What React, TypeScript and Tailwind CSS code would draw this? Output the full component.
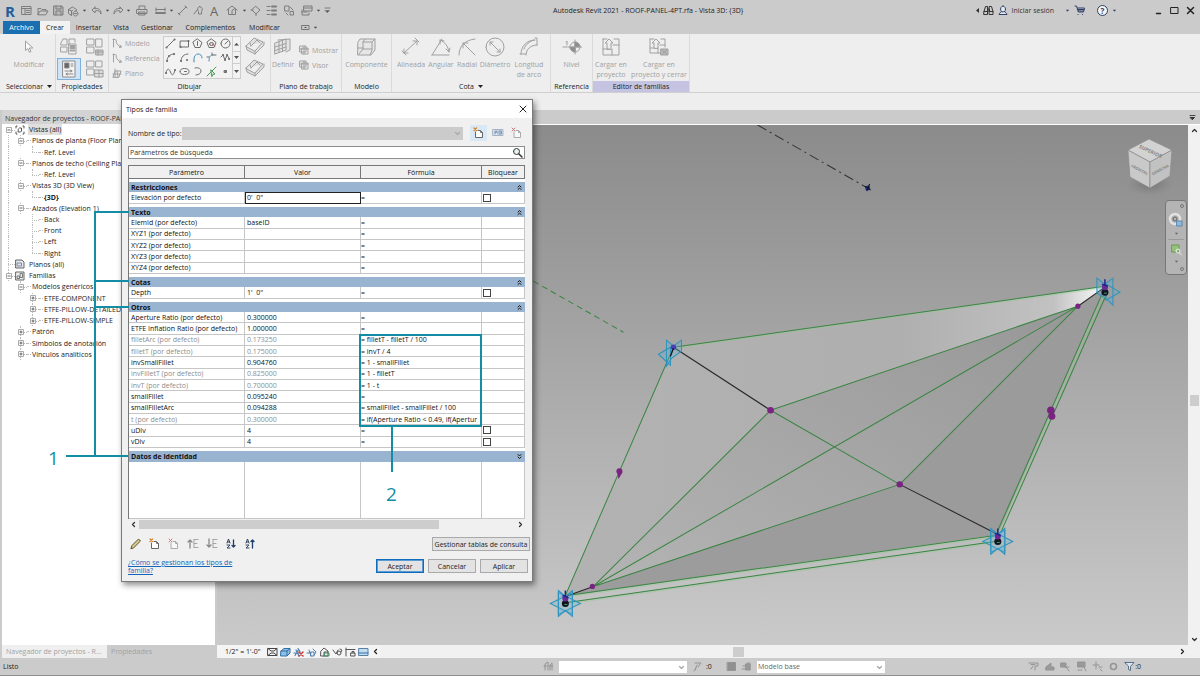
import React from "react";
import type { ReactNode } from "react";

type Stroke = { d: string; c?: string; f?: string; w?: number };

function Icon({ w, h, parts, className = "" }: { w: number; h: number; parts: Stroke[]; className?: string }) {
  return (
    <svg width={w} height={h} viewBox={`0 0 ${w} ${h}`} className={`shrink-0 ${className}`} aria-hidden="true">
      {parts.map((p, i) => (
        <path key={i} d={p.d} fill={p.f ?? "none"} stroke={p.c ?? "currentColor"} strokeWidth={p.w ?? 1} strokeLinecap="round" strokeLinejoin="round" />
      ))}
    </svg>
  );
}

const caret = (
  <svg width="5" height="3" viewBox="0 0 5 3" className="shrink-0" aria-hidden="true">
    <path d="M0 0h5L2.500 3z" fill="currentColor" />
  </svg>
);

const quickTools: { slot: string; label: string; w?: number; h?: number; parts?: Stroke[]; text?: string; caret?: boolean }[] = [
  { slot: "w-4", label: "Inicio", w: 11, h: 11, parts: [{ d: "M1 1.500h9v8h-9zM1 3.500h9M4 3.500v6M5.500 5.500h3M5.500 7.500h3" }] },
  { slot: "w-[18px]", label: "Abrir", w: 12, h: 10, parts: [{ d: "M1 8.500v-6h3l1 1h4v1.500M1 8.500l2-3.500h8l-2 3.500z" }] },
  { slot: "w-[13px]", label: "Guardar", w: 11, h: 11, parts: [{ d: "M1 1h8l1 1v8h-9z", f: "#b9b9b9" }, { d: "M3 1v3h5v-3M3 10v-4h5v4" }] },
  { slot: "w-[15px]", label: "Sincronizar", w: 12, h: 12, parts: [{ d: "M1.500 4.500l4-2.500 4 2.500v1M1.500 4.500v4l3 2M1.500 4.500l3 1.500v4M4.500 6l1-.5" }, { d: "M8.500 6a2.500 2.500 0 1 0 .1 0M7 8.500h3" }] },
  { slot: "w-2", label: "Opciones de sincronizar", caret: true },
  { slot: "w-4", label: "Deshacer", w: 11, h: 9, parts: [{ d: "M4 1L1 4l3 3v-2c3-1 5 0 6 3 0-4-2-6-6-5.500z" }] },
  { slot: "w-[7px]", label: "Lista deshacer", caret: true },
  { slot: "w-[14px]", label: "Rehacer", w: 11, h: 9, parts: [{ d: "M7 1l3 3-3 3v-2c-3-1-5 0-6 3 0-4 2-6 6-5.500z" }] },
  { slot: "w-[7px]", label: "Lista rehacer", caret: true },
  { slot: "w-5", label: "Imprimir", w: 12, h: 11, parts: [{ d: "M3 4v-3h6v3M1 4.500h10v4h-10zM3 7h6v3h-6z" }] },
  { slot: "w-4", label: "Medir", w: 11, h: 8, parts: [{ d: "M1 1v3M10 1v3M1 2.500h9" }, { d: "M1 6h9", w: 2 }] },
  { slot: "w-[6px]", label: "Opciones de medir", caret: true },
  { slot: "w-4", label: "Cota alineada", w: 11, h: 11, parts: [{ d: "M2 9l7-7M1 8l2 2M8 1l2 2", w: 1 }] },
  { slot: "w-4", label: "Etiqueta", w: 11, h: 11, parts: [{ d: "M1 9l3-4M6.500 1.500a3 3 0 0 1 2 5v2.500h-3v-2.500a3 3 0 0 1 1-5z" }] },
  { slot: "w-4", label: "Texto", text: "A" },
  { slot: "w-[19px]", label: "Vista 3D", w: 12, h: 11, parts: [{ d: "M1 5l5-4 5 4M2.500 4.500v5h7v-5M6 9.500v-4l3-2" }] },
  { slot: "w-[6px]", label: "Opciones 3D", caret: true },
  { slot: "w-4", label: "Sección", w: 11, h: 11, parts: [{ d: "M6 1.500l4 3.500-4 4-4-4zM1 5h2M6 9v1.500" }] },
  { slot: "w-4", label: "Líneas finas", w: 11, h: 11, parts: [{ d: "M1 1.500h3M1 5.500h3M1 9.500h3" }, { d: "M6 1.500h4M6 5.500h4M6 9.500h4", w: 2 }] },
  { slot: "w-5", label: "Cerrar ocultas", w: 11, h: 11, parts: [{ d: "M1 1h4v5h-4zM6.500 6.500h3v3.500h-3zM6 2l3 3M2 8l2 2" }] },
  { slot: "w-[16px]", label: "Cambiar ventana", w: 12, h: 11, parts: [{ d: "M3 1h8v5h-8zM3 3h8M1 5v5h7v-2M1 7h5" }] },
  { slot: "w-[6px]", label: "Lista de ventanas", caret: true },
  { slot: "w-3", label: "Personalizar", w: 7, h: 7, parts: [{ d: "M1 1h5" }, { d: "M1.500 3.500h4l-2 2z", f: "#4a4a4a" }] },
];

const ribbonTabs = [
  { name: "Archivo", cls: "w-[37px] bg-[#1b6fb0] text-white" },
  { name: "Crear", cls: "w-[30px] bg-[#f2f2f2] text-[#222]" },
  { name: "Insertar", cls: "w-[37px] text-[#222]" },
  { name: "Vista", cls: "w-[28px] text-[#222]" },
  { name: "Gestionar", cls: "w-[44px] text-[#222]" },
  { name: "Complementos", cls: "w-[63px] text-[#222]" },
  { name: "Modificar", cls: "w-[45px] text-[#222]" },
];

function Panel({ title, width, children, caretAfter = false, active = false }: { title: string; width: string; children: ReactNode; caretAfter?: boolean; active?: boolean }) {
  return (
    <section className={`flex shrink-0 flex-col border-r border-[#dadada] ${width}`}>
      <div className="flex h-[47px] items-start justify-center pt-0.5 text-[#a0a0a0]">{children}</div>
      <h2 className={`flex h-[11px] items-center justify-center gap-1 text-[#222] ${active ? "bg-[#c4c4e2]" : ""}`}>
        {title}
        {caretAfter && caret}
      </h2>
    </section>
  );
}

function BigTool({ label, width, icon }: { label: string; width: string; icon: ReactNode }) {
  return (
    <button type="button" className={`flex shrink-0 flex-col items-center ${width}`}>
      <span className="flex h-[22px] items-center">{icon}</span>
      <span className="pt-0.5 text-center leading-[10px] whitespace-pre-line">{label}</span>
    </button>
  );
}

const g = "#8b8b8b";
const drawTools: { label: string; parts: Stroke[] }[] = [
  { label: "Línea", parts: [{ d: "M2 9l7-7" }, { d: "M1.500 9.500h.1M9.500 1.500h.1", w: 2 }] },
  { label: "Rectángulo", parts: [{ d: "M1.500 3h8v6h-8z" }, { d: "M1.500 9h.1M9.500 3h.1", w: 2 }] },
  { label: "Polígono inscrito", parts: [{ d: "M5.500 1l4.500 3.500-2 5h-5l-2-5zM5.500 3.500v4" }] },
  { label: "Polígono circunscrito", parts: [{ d: "M5.500 1l4.500 3.500-2 5h-5l-2-5zM3.500 6a2 1.500 0 1 0 4 0 2 1.500 0 1 0-4 0" }, { d: "M6 6l3 2", c: "#c66" }] },
  { label: "Círculo", parts: [{ d: "M1 5.500a4.500 4.500 0 1 0 9 0 4.500 4.500 0 1 0-9 0M5 6l3-3" }] },
  { label: "Arco inicio-fin", parts: [{ d: "M2 9c0-4 3-7 7-7" }, { d: "M2 9h.1M9 2h.1M4 4h.1", w: 2 }] },
  { label: "Arco centro", parts: [{ d: "M2 9c0-4 3-7 7-7" }, { d: "M2 9h.1M8 8h.1", w: 2 }] },
  { label: "Arco tangente", parts: [{ d: "M2 9v-2c0-3 2-5 4-5s4 1 4 4", c: "#4b8fbe" }, { d: "M2 9v1", c: g }] },
  { label: "Arco de empalme", parts: [{ d: "M3 9c0-4 1-6 4-6", c: "#4b8fbe" }, { d: "M1 5h2M7 3h3M6 1v2" }] },
  { label: "Spline", parts: [{ d: "M1 5l2-2 2 5 2-5 2 3" }, { d: "M3 3h.1M5 8h.1M7 3h.1M9 7h.1", w: 2 }] },
  { label: "Spline por puntos", parts: [{ d: "M1 7c1-5 3-5 4.500-1s3 4 4.500-2" }, { d: "M1 7h.1M10 4h.1", w: 2 }] },
  { label: "Elipse", parts: [{ d: "M1 5.500a4.500 3 0 1 0 9 0 4.500 3 0 1 0-9 0M5.500 5.500h2" }] },
  { label: "Elipse parcial", parts: [{ d: "M3 2c4-1 6 1 6 3s-2 4-5 4" }] },
  { label: "Seleccionar líneas", parts: [{ d: "M1 10l9-9", c: "#4a9a55" }, { d: "M5 4l4 4-2 .3-1 2z", c: "#4a9a55", f: "#d9ecd9" }] },
  { label: "Punto", parts: [{ d: "M4.500 4.500h2v2h-2z", f: "#777" }] },
];

function RibbonPanels() {
  const cell = "flex items-center justify-center";
  return (
    <div className="flex h-[59px] overflow-hidden border-b border-[#cfcfcf] bg-[#eeeeee] pl-[3px]">
      <Panel title="Seleccionar" width="w-[53px]" caretAfter>
        <BigTool label="Modificar" width="w-12" icon={<Icon w={10} h={14} parts={[{ d: "M1.500 1.500v9l2.300-2 1.700 3.800 1.500-.8-1.700-3.500h3.200z", f: "#fafafa" }]} />} />
      </Panel>
      <Panel title="Propiedades" width="w-[53px]">
        <div className="grid grid-cols-2 gap-x-0.5">
          <button type="button" aria-label="Categoría y parámetros" className={`${cell} h-[22px] w-6`}>
            <Icon w={20} h={20} parts={[{ d: "M2 6l2-4h4v6h-6zM10 8v-6h6v3M2 10h6v5h-6zM10 7h7v10h-7z" }, { d: "M11.500 9h4M11.500 11h4M11.500 13.500h4", w: 2 }]} />
          </button>
          <button type="button" aria-label="Tipos de familia" className={`${cell} h-[22px] w-6`}>
            <Icon w={20} h={20} parts={[{ d: "M2 2h7v6h-7zM11 2h6v8h-6zM2 10h7v6h-7z" }, { d: "M11 13h7v5h-7zM11 15h7M13 13v5", f: "#c8c8c8" }]} />
          </button>
          <button type="button" aria-label="Propiedades" className={`${cell} h-[22px] w-6 border border-[#7eb0da] bg-[#cfe4f6] text-[#8a8a8a]`}>
            <Icon w={14} h={18} parts={[{ d: "M1 1h12v16h-12z", f: "#f4f4f4" }, { d: "M3 3h4v5h-4z", f: "#666" }, { d: "M9 4h2M9 6h2M3 11h7M4 14h7M8.500 10l1.500 1-1.500 1M5.500 13l-1.500 1 1.500 1" }]} />
          </button>
          <button type="button" aria-label="Propiedades de tipo" className={`${cell} h-[22px] w-6`}>
            <Icon w={20} h={20} parts={[{ d: "M2 2h7v6h-7zM11 2h6v6h-6zM2 10h7v6h-7z" }, { d: "M10 11h8v7h-8zM10 14.500h8M14 11v7", f: "#dedede" }]} />
          </button>
        </div>
      </Panel>
      <Panel title="Dibujar" width="w-[162px]">
        <div className="flex w-full pl-[3px]">
          <div className="flex w-[51px] flex-col gap-[5px] pt-0.5">
            {["Modelo", "Referencia", "Plano"].map((n) => (
              <button type="button" key={n} className="flex h-[10px] items-center gap-[3px]">
                <Icon w={10} h={10} parts={n === "Plano" ? [{ d: "M1 9l2-6h6l-2 6zM3 1v8M5 3l1 6M1 6h8" }] : [{ d: "M1.500 1v8M1 1.500h2M4 2c0 4 2 6 5 7M8 7l1.500 2-2 .5" }]} />
                {n}
              </button>
            ))}
          </div>
          <div className="flex h-[43px] w-[78px] border border-[#cdcdcd] bg-[#f2f2f2]">
            <div className="grid flex-1 grid-cols-5 grid-rows-3 text-[#6c6c6c]">
              {drawTools.map((t) => (
                <button type="button" key={t.label} aria-label={t.label} className={cell}>
                  <Icon w={11} h={11} parts={t.parts} />
                </button>
              ))}
            </div>
            <div className="grid w-2 grid-rows-3 border-l border-[#cdcdcd] text-[#555]">
              <button type="button" aria-label="Subir" className="flex rotate-180 items-center justify-center">{caret}</button>
              <button type="button" aria-label="Bajar" className={`${cell} border-y border-[#cdcdcd]`}>{caret}</button>
              <button type="button" aria-label="Más" className={cell}>{caret}</button>
            </div>
          </div>
          <div className="flex w-[25px] flex-col items-center gap-0.5 pl-0.5">
            {["Definir en cara", "Definir en plano"].map((n) => (
              <button type="button" key={n} aria-label={n}>
                <Icon w={20} h={20} parts={[{ d: "M1 10l8-8 9 4-8 9zM1 10l1 4 8 4 9-9v-3M10 15v3", f: "#e0e0e0" }, { d: "M6 10l6-6 3 3M6 10l-1-3" }]} />
              </button>
            ))}
          </div>
        </div>
      </Panel>
      <Panel title="Plano de trabajo" width="w-[71px]">
        <div className="flex w-full justify-between pr-[3px]">
          <BigTool label="Definir" width="w-6" icon={<Icon w={20} h={20} parts={[{ d: "M2 6l11-4v11l-11 4zM5 3l12-1v11l-4 2M2 10l11-3.500M2 13.500l11-3.500M6 4.500v11M9.500 3.500v11", f: "#e4e4e4" }]} />} />
          <div className="flex flex-col gap-[5px] pt-[9px]">
            {["Mostrar", "Visor"].map((n) => (
              <button type="button" key={n} className="flex h-[10px] items-center gap-[3px]">
                <Icon w={10} h={10} parts={[{ d: "M1 1h6v6h-6zM3 3h6v6h-6zM1 4h8M5 1v8" }]} />
                {n}
              </button>
            ))}
          </div>
        </div>
      </Panel>
      <Panel title="Modelo" width="w-[50px]">
        <BigTool label="Componente" width="w-12" icon={<Icon w={20} h={20} parts={[{ d: "M1 5l2-3h15v11l-4 5h-13z", f: "#e6e6e6" }, { d: "M1 11h5v-6l2-3M6 5h9l3-3M15 5v8l-2 5M6 11v1l-4 5M6 12h9" }]} />} />
      </Panel>
      <Panel title="Cota" width="w-[159px]" caretAfter>
        <BigTool label="Alineada" width="w-8" icon={<Icon w={20} h={20} parts={[{ d: "M3 16l13-12M1 14l4 4M14 1l4 4M3 12v4h4M12 4h4v4" }]} />} />
        <BigTool label="Angular" width="w-7" icon={<Icon w={20} h={20} parts={[{ d: "M1 18h17M1 18l10-16M9 3c5 2 8 6 9 12M9 7v-4l4 1M15 12l3 3 1-4" }]} />} />
        <BigTool label="Radial" width="w-6" icon={<Icon w={20} h={20} parts={[{ d: "M2 18c0-9 6-15 16-16M6 6l12 12M6 11v-5h5" }]} />} />
        <BigTool label="Diámetro" width="w-8" icon={<Icon w={20} h={20} parts={[{ d: "M1 10a9 9 0 1 0 18 0a9 9 0 1 0-18 0M5 5l10 10M5 8v-3h3M12 15h3v-3" }]} />} />
        <BigTool label={"Longitud\nde arco"} width="w-9" icon={<Icon w={20} h={20} parts={[{ d: "M2 17c0-8 6-14 14-14M7 18c0-6 5-10 11-10M5 12c1-4 6-8 10-9M1 17h6M16 1h2v7" }]} />} />
      </Panel>
      <Panel title="Referencia" width="w-[42px]">
        <BigTool label="Nivel" width="w-9" icon={<Icon w={20} h={16} parts={[{ d: "M1 8h4M4 3l1-1v4" }, { d: "M8 8a5 5 0 1 0 10 0a5 5 0 1 0-10 0M6 8h14M13 1v14" }, { d: "M13 3a5 5 0 0 1 5 5h-5zM13 13a5 5 0 0 1-5-5h5z", f: "#8d8d8d" }]} />} />
      </Panel>
      <Panel title="Editor de familias" width="w-[97px]" active>
        <BigTool label={"Cargar en\nproyecto"} width="w-9" icon={<Icon w={18} h={20} parts={[{ d: "M1 2h4M12 2h5v16h-16v-16M1 12h6M11 8h6M10 12v6M5 12v-6h-2l4-4 4 4h-2v6z" }]} />} />
        <BigTool label={"Cargar en\nproyecto y cerrar"} width="w-[60px]" icon={<Icon w={20} h={20} parts={[{ d: "M1 2h4M12 2h4v8M1 2v14h10M11 8h5M5 11v-5h-2l4-4 4 4h-2v5zM1 11h4M9 11v5" }, { d: "M12 12h7v6h-7z", f: "#bbb" }, { d: "M13.500 13.500l4 3M17.500 13.500l-4 3" }]} />} />
      </Panel>
    </div>
  );
}

function TopBar() {
  return (
    <header className="bg-[#cbcbcb]">
      <div className="flex h-[21px] items-center text-[#7c7c7c]">
        <div className="flex w-[553px] shrink-0 items-center pl-0.5">
          <span className="w-4 text-center font-bold text-[15px] leading-[18px] text-[#1f5f9c]">R</span>
          {quickTools.map((t) => (
            <button type="button" key={t.label} aria-label={t.label} className={`flex shrink-0 items-center justify-center ${t.slot}`}>
              {t.caret ? <span className="scale-75 text-[#444]">{caret}</span> : t.text ? <span className="text-[13px] leading-[14px] text-[#666]">{t.text}</span> : <Icon w={t.w!} h={t.h!} parts={t.parts!} />}
            </button>
          ))}
        </div>
        <h1 className="whitespace-nowrap text-[#222]">Autodesk Revit 2021 - ROOF-PANEL-4PT.rfa - Vista 3D: {"{3D}"}</h1>
        <div className="flex flex-1 items-center justify-end gap-1 pr-[5px] text-[#2d3f66]">
          <svg width="3" height="5" viewBox="0 0 3 5" aria-hidden="true"><path d="M3 0v5L0 2.500z" fill="#333" /></svg>
          <button type="button" aria-label="Buscar"><Icon w={11} h={11} parts={[{ d: "M1 6.500l1.500-5h2v8h-3.500zM6.500 1.500h2l1.500 5v3h-3.500zM4.500 4h2v2h-2M1 6.500h3.500M6.500 6.500h3.500", c: "#333" }]} /></button>
          <button type="button" className="mr-[7px] flex items-center gap-[3px]">
            <Icon w={10} h={11} parts={[{ d: "M5 1a2.500 3 0 1 0 .1 0M3.500 6.500c0 1.500-2.500 1-2.500 3h8c0-2-2.500-1.500-2.500-3", f: "#e6ebf3" }]} />
            <span className="text-[#333]">Iniciar sesión</span>
          </button>
          <span className="scale-75">{caret}</span>
          <button type="button" aria-label="Tienda" className="mr-1"><Icon w={11} h={11} parts={[{ d: "M1 1h1.500l2 6h5l1-4h-7M4 9.500h.1M8.500 9.500h.1", w: 1 }, { d: "M3.500 4.500h6.500M4 6h5" }]} /></button>
          <button type="button" aria-label="Ayuda" className="ml-1 flex h-[11px] w-[11px] items-center justify-center rounded-full border border-[#2d3f66] bg-[#f5f5f5] text-[8px] font-bold leading-[8px]">?</button>
          <span className="mr-[34px] scale-75">{caret}</span>
          <button type="button" aria-label="Minimizar" className="w-[11px]"><Icon w={8} h={9} parts={[{ d: "M1.500 7.500h4", c: "#222", w: 1.5 }]} /></button>
          <button type="button" aria-label="Maximizar" className="w-3"><Icon w={9} h={9} parts={[{ d: "M1 1.500h7v6h-7z", c: "#222" }]} /></button>
          <button type="button" aria-label="Cerrar"><Icon w={9} h={9} parts={[{ d: "M1.500 1.500l6 6M7.500 1.500l-6 6", c: "#222", w: 1.5 }]} /></button>
        </div>
      </div>
      <nav className="flex h-[13px] items-stretch pl-[3px]">
        {ribbonTabs.map((t) => (
          <a key={t.name} href="#" className={`flex items-center justify-center ${t.cls}`}>{t.name}</a>
        ))}
        <button type="button" aria-label="Contraer cinta" className="flex items-center gap-[3px] pl-[14px] text-[#444]">
          <Icon w={9} h={7} parts={[{ d: "M1 1.500h7v4h-7z", c: "#777" }, { d: "M4 3.500h1" }]} />
          <span className="scale-75">{caret}</span>
        </button>
      </nav>
      <RibbonPanels />
      <div className="h-[17px] bg-[#eeeeee]" />
    </header>
  );
}

type Node = { t: string; box?: "-" | "+"; icon?: "v" | "p" | "f"; guides?: boolean[]; last?: boolean; bold?: boolean; sel?: boolean };
const tree: Node[] = [
  { t: "Vistas (all)", box: "-", icon: "v", sel: true },
  { t: "Planos de planta (Floor Plan)", box: "-", guides: [true] },
  { t: "Ref. Level", guides: [true, true], last: true },
  { t: "Planos de techo (Ceiling Plan)", box: "-", guides: [true] },
  { t: "Ref. Level", guides: [true, true], last: true },
  { t: "Vistas 3D (3D View)", box: "-", guides: [true] },
  { t: "{3D}", guides: [true, true], last: true, bold: true },
  { t: "Alzados (Elevation 1)", box: "-", guides: [true] },
  { t: "Back", guides: [true, false] },
  { t: "Front", guides: [true, false] },
  { t: "Left", guides: [true, false] },
  { t: "Right", guides: [true, false], last: true },
  { t: "Planos (all)", icon: "p" },
  { t: "Familias", box: "-", icon: "f" },
  { t: "Modelos genéricos", box: "-", guides: [false] },
  { t: "ETFE-COMPONENT", box: "+", guides: [false, true] },
  { t: "ETFE-PILLOW-DETAILED", box: "+", guides: [false, true] },
  { t: "ETFE-PILLOW-SIMPLE", box: "+", guides: [false, true] },
  { t: "Patrón", box: "+", guides: [false] },
  { t: "Símbolos de anotación", box: "+", guides: [false] },
  { t: "Vínculos analíticos", box: "+", guides: [false] },
];

function TreeIcon({ kind }: { kind: "v" | "p" | "f" }) {
  if (kind === "v") return <Icon w={10} h={10} parts={[{ d: "M1 3v-2h1M8 1h1v2M9 7v2h-1M2 9h-1v-2M3.500 4l1-1h2v3l-1 1h-2z", c: "#555" }]} />;
  if (kind === "p") return <Icon w={10} h={10} parts={[{ d: "M1 1h6l2 2v6h-8z", c: "#666", f: "#dfe6ee" }, { d: "M2.500 4h4v3h-4z", c: "#889" }]} />;
  return <Icon w={10} h={10} parts={[{ d: "M1 1h8v8h-8z", c: "#666", f: "#eee" }, { d: "M5.500 2.500h2v4h-2zM2.500 5h2v2.500h-2z", c: "#777" }]} />;
}

function Browser() {
  return (
    <aside className="flex w-[217px] shrink-0 flex-col border-l-2 border-[#cbcbcb] bg-[#cbcbcb]">
      <h2 className="flex h-[14px] items-center bg-[#d3d3d3] pl-[3px] pt-0.5 text-[#333]">Navegador de proyectos - ROOF-PANEL-4PT.rfa</h2>
      <div className="mr-0.5 flex-1 bg-white">
        <ul className="grid h-[236px] grid-rows-[repeat(21,minmax(0,1fr))] text-[#222]">
          {tree.map((n, i) => (
            <li key={i} className="flex items-stretch">
              {(n.guides ?? []).map((on, k) => (
                <span key={k} className="flex w-3 shrink-0 justify-center">
                  {on && k === 0 && <i className="border-l border-dotted border-[#bbb]" />}
                </span>
              ))}
              <span className="relative flex w-[13px] shrink-0 items-center justify-center">
                {i > 0 && <i className={`absolute top-0 left-1.5 border-l border-dotted border-[#bbb] ${n.last ? "h-1/2" : "h-full"}`} />}
                <i className="absolute top-1/2 right-0 left-1.5 border-t border-dotted border-[#bbb]" />
                {n.box && (
                  <svg width="6" height="6" viewBox="0 0 6 6" className="relative" aria-hidden="true">
                    <path d="M.5 .5h5v5h-5z" fill="#fff" stroke="#aaa" />
                    <path d={n.box === "-" ? "M1.500 3h3" : "M1.500 3h3M3 1.500v3"} stroke="#444" strokeWidth=".8" />
                  </svg>
                )}
              </span>
              {n.icon ? <span className="flex w-[13px] items-center"><TreeIcon kind={n.icon} /></span> : <i className="w-1 shrink-0 self-center border-t border-dotted border-[#bbb]" />}
              <span className={`flex items-center px-px whitespace-nowrap ${n.bold ? "font-bold" : ""} ${n.sel ? "bg-[#e0e0e0]" : ""}`}>{n.t}</span>
            </li>
          ))}
        </ul>
      </div>
      <div className="flex h-[13px] text-[#a2a2a2]">
        <button type="button" className="w-[105px] bg-[#efefef] pl-1 text-left">Navegador de proyectos - R...</button>
        <button type="button" className="pl-1">Propiedades</button>
      </div>
    </aside>
  );
}

function Star({ x, y }: { x: number; y: number }) {
  return (
    <g transform={`translate(${x} ${y})`} stroke="#2d93bd" strokeWidth="1" fill="#55b4dc" fillOpacity=".25">
      <path d="M-15 0L7-11v22zM15 0L-7-11v22z" />
      <path d="M-7-13L0-7l7-6v26l-7-6-7 6z" />
    </g>
  );
}

function Scene() {
  const dot = "#7a2382";
  return (
    <svg viewBox="218 125 970 521" preserveAspectRatio="xMinYMin slice" className="block h-full w-full" role="img" aria-label="Modelo 3D del panel">
      <defs>
        <linearGradient id="mid" x1="0" y1="1" x2="1" y2="0"><stop offset="0" stopColor="#b4b4b4" /><stop offset="1" stopColor="#979797" /></linearGradient>
        <linearGradient id="face" x1="0" y1="0" x2="1" y2="0"><stop offset="0" stopColor="#b2b2b2" /><stop offset="1" stopColor="#adadad" /></linearGradient>
        <linearGradient id="shine" x1="0" y1="0" x2="1" y2="0"><stop offset="0" stopColor="#fff" stopOpacity="0" /><stop offset=".75" stopColor="#fff" stopOpacity=".25" /><stop offset="1" stopColor="#fff" stopOpacity=".95" /></linearGradient>
        <radialGradient id="shade"><stop offset="0" stopColor="#555" stopOpacity=".5" /><stop offset="1" stopColor="#777" stopOpacity="0" /></radialGradient>
      </defs>
      <path d="M758 125L868 188" stroke="#333" strokeDasharray="10 4 2 4" />
      <path d="M534 281L624 332" stroke="#3a8542" strokeDasharray="6 4" />
      <circle cx="868" cy="188" r="2.500" fill="#2734a0" /><path d="M865 186l6 4M870 184l-3 7" stroke="#111" />

      <path d="M674 347L1105 286L998 534L566 596z" fill="url(#face)" />
      <path d="M900 315L1105 286L1078 306L900 366z" fill="url(#shine)" />
      <path d="M1078 306L771 410L594 586L900 484z" fill="url(#mid)" />
      <path d="M1105 288L1078 306L900 484L998 534z" fill="#9b9b9b" />
      <path d="M900 484L594 586L568 595L998 534z" fill="#9c9c9c" />

      <g stroke="#8fc98f" strokeWidth="2" strokeOpacity=".35" fill="none"><path d="M674 348L1105 287M568 596L995 536M568 603L995 542M999 532L1105 292" /></g>
      <g stroke="#3a8542" strokeWidth="1" fill="none">
        <path d="M674 347L1105 286M674 347L566 595M771 410L1078 306M771 410L900 484M771 410L594 586M1078 306L594 586M1078 306L900 484M900 484L594 586" />
        <path d="M568 595L995 535M568 602L995 541M998 530L1103 292M1001 532L1107 293" />
      </g>
      <path d="M674 347L771 410M900 484L998 534M1105 287L1078 306M566 596L594 586" stroke="#2a2a2a" strokeWidth="1.100" />
      <g stroke="#2d93bd" fill="#55b4dc" fillOpacity=".3">
        <path d="M659 354l12-7v18zM667 340l7 6 8-6v11l-10 7-5 8z" />
        <path d="M1097 278l8 6 8-6v27l-6-6-10-6zM1120 292l-14-8v16z" />
      </g>
      <Star x={998} y={541} />
      <Star x={566} y={603} />
      {[[1105, 288], [998, 537], [566, 599]].map(([x, y]) => (
        <g key={x}>
          <circle cx={x} cy={y + 4} r="3.500" fill="#141420" /><circle cx={x} cy={y - 1} r="3" fill="#6a2a96" />
          <path d={`M${x} ${y - 9}v6M${x - 3} ${y - 4}l6 2`} stroke="#26268a" strokeWidth="1.500" /><path d={`M${x - 1} ${y + 5}h3`} stroke="#2a9a7a" />
        </g>
      ))}
      <circle cx="674" cy="347" r="2.700" fill="#4a3fb4" /><path d="M674 348l-3 8" stroke="#111" strokeWidth="1.200" />
      <g fill={dot}>
        <circle cx="771" cy="410" r="3.300" /><circle cx="900" cy="484" r="3.200" /><circle cx="620" cy="471" r="3" /><circle cx="593" cy="586" r="2.600" />
        <circle cx="1078" cy="306" r="2.600" /><circle cx="1051" cy="410" r="3.800" /><circle cx="1052" cy="416" r="3.500" /><path d="M618 472l5 0-4 7z" />
      </g>

      <ellipse cx="1150" cy="184" rx="24" ry="12" fill="url(#shade)" />
      <g stroke="#8a8a8a" strokeWidth=".7">
        <path d="M1149 139L1172 150L1150 162L1128 150z" fill="#d2d2d2" />
        <path d="M1128 150L1150 162V188L1130 177z" fill="#c9c9c9" />
        <path d="M1172 150L1150 162V188L1170 176z" fill="#c2c2c2" />
      </g>
      <g fontSize="5" fill="#858585" textAnchor="middle" fontWeight="700">
        <text transform="translate(1150 153) rotate(25)">SUPERIOR</text>
        <text transform="translate(1139 171) rotate(28)" fontSize="4">FRONTAL</text>
        <text transform="translate(1161 171) rotate(-28)" fontSize="4">DERECHA</text>
      </g>
    </svg>
  );
}

function Chevron({ dir, className = "" }: { dir: "up" | "down" | "left" | "right"; className?: string }) {
  const d = { up: "M1.500 4.500L3.500 2.500l2 2", down: "M1.500 2.500l2 2 2-2", left: "M4.500 1.500l-2 2 2 2", right: "M2.500 1.500l2 2-2 2" }[dir];
  return <Icon w={7} h={7} className={className} parts={[{ d, w: 1.3 }]} />;
}

const viewTools: { label: string; parts: Stroke[] }[] = [
  { label: "Nivel de detalle", parts: [{ d: "M1 1.500h9v7h-9zM1 1.500l3 2.500h3l3-2.500M1 8.500l3-2.500h3l3 2.500", c: "#444" }] },
  { label: "Estilo visual", parts: [{ d: "M1 4l3-2.500h6v4.500l-3 3h-6z", c: "#2f6fa5", f: "#8fc0e6" }, { d: "M1 4h6v4.500M7 4l3-2.500", c: "#2f6fa5" }] },
  { label: "Camino de sol", parts: [{ d: "M1 6h5M3 3l3 6M5 1.500l2 3M2 8.500l3-5", c: "#4a80b0", w: 1.2 }, { d: "M6 5l4 4M10 5l-4 4", c: "#c83c3c", w: 1.5 }] },
  { label: "Sombras", parts: [{ d: "M1 6h4M3 3l2 6M5 5h3v4h-3zM7 2l3 3-2 3", c: "#4a80b0" }] },
  { label: "Recorte", parts: [{ d: "M2 4l3-3 4 3v5h-7zM5 9v-4h4", c: "#555" }, { d: "M6 6h4v3h-4z", c: "#4b8b6a" }] },
  { label: "Ocultar temporalmente", parts: [{ d: "M1 3l3 4 2-4M5 6a2 2 0 1 0 4 0a2 2 0 1 0-4 0M8 2l2 1-1 2", c: "#555" }] },
  { label: "Restricciones", parts: [{ d: "M1 1v8M1 2.500h9M6 6h4v3h-4zM7 6v-1.500h2v1.500", c: "#555" }] },
  { label: "Vista preliminar", parts: [{ d: "M1 1.500h9v7h-9z", c: "#5a7fa5", f: "#c3dcf0" }, { d: "M1 6h9", c: "#2f6fa5" }] },
];

function Viewport() {
  return (
    <main className="flex min-w-0 flex-1 flex-col">
      <div className="flex h-[14px] items-center justify-end bg-[#cbcbcb] pr-1 text-[#333]">
        <button type="button" aria-label="Lista de vistas"><Icon w={7} h={7} parts={[{ d: "M1 1.500h5", c: "#444" }, { d: "M1.500 3.500h4l-2 2z", c: "#333", f: "#333" }]} /></button>
      </div>
      <div className="flex min-h-0 flex-1 border-t border-white">
        <div className="relative min-w-0 flex-1 bg-linear-to-b from-[#8b8b8b] to-[#cacaca]">
          <Scene />
          <div className="absolute top-[75px] right-px flex h-[75px] w-[22px] flex-col items-center justify-between rounded-sm border border-[#767676] bg-[#b4b4b4] py-[3px] text-[#666]">
            <button type="button" aria-label="Cerrar barra" className="mr-0.5 h-1 w-1 self-end rounded-full border border-[#777]" />
            <button type="button" aria-label="Rueda de navegación"><Icon w={16} h={16} parts={[{ d: "M2 7a5 5 0 1 0 10 0a5 5 0 1 0-10 0", c: "#e2e2e2", w: 2.5 }, { d: "M5 7a2 2 0 1 0 4 0a2 2 0 1 0-4 0" }, { d: "M9 9h5v5h-5z", c: "#5a88b0", f: "#8fbbe0" }]} /></button>
            <span className="scale-75">{caret}</span>
            <hr className="w-4 border-[#999]" />
            <button type="button" aria-label="Zoom"><Icon w={12} h={12} parts={[{ d: "M2 1h7v7h-7z", c: "#6d9a59", f: "#94c27c" }, { d: "M6 7a2 2 0 1 0 4 0a2 2 0 1 0-4 0M9.500 9l2 2", c: "#eee" }]} /></button>
            <span className="scale-75">{caret}</span>
            <button type="button" aria-label="Opciones de barra" className="mr-0.5 h-1 w-1 self-end rounded-full border border-[#777]" />
          </div>
        </div>
        <div className="flex w-3 flex-col items-center bg-[#f1f1f1] py-0.5 text-[#333]">
          <Chevron dir="up" />
          <i className="flex-[26]" />
          <i className="h-[11px] w-[9px] bg-[#cdcdcd]" />
          <i className="flex-[23]" />
          <Chevron dir="down" />
        </div>
      </div>
      <div className="flex h-[13px] items-center bg-[#f4f4f4] pl-2 text-[#222]">
        <span className="w-[42px]">1/2" = 1'-0"</span>
        {viewTools.map((t) => (
          <button type="button" key={t.label} aria-label={t.label} className="w-[13px]"><Icon w={11} h={10} parts={t.parts} /></button>
        ))}
        <Chevron dir="left" className="mx-px" />
        <div className="flex flex-1 items-center justify-end self-stretch bg-[#f1f1f1] pr-[14px]">
          <i className="mr-auto ml-[353px] h-2.5 w-[11px] bg-[#cdcdcd]" />
          <Chevron dir="right" />
        </div>
      </div>
    </main>
  );
}

function StatusBar() {
  const faint = "#949494";
  return (
    <footer className="flex h-[18px] items-center border-b border-[#8e8e8e] bg-[#cbcbcb] pl-[3px] text-[#222]">
      <span className="w-[540px]">Listo</span>
      <Icon w={11} h={11} parts={[{ d: "M2 9v-6l3-2v8M7 9v-5l2-2v7M1 5h3M6 5h4", c: faint }]} />
      <label className="relative ml-[5px] w-32 bg-white">
        <select aria-label="Subproyecto activo" className="block h-3 w-full appearance-none text-[7px]"><option></option></select>
        <Chevron dir="down" className="pointer-events-none absolute top-[3px] right-0.5 text-[#aaa]" />
      </label>
      <Icon w={11} h={11} className="ml-[5px]" parts={[{ d: "M3 9l2-5M3 2h6l-3 4M2 10l2-2", c: faint }]} />
      <span className="ml-[3px] w-5">:0</span>
      <Icon w={11} h={11} parts={[{ d: "M1.500 1.500h8v8h-8z", c: faint, f: "#909090" }]} />
      <Icon w={11} h={11} className="ml-1" parts={[{ d: "M1 8h5v-6h3v7M2 5h3", c: faint }, { d: "M5 3h4v6h-4z", c: faint, f: "#999" }]} />
      <label className="relative ml-[5px] w-32 bg-white">
        <select aria-label="Opción de diseño" className="block h-3 w-full appearance-none pl-px text-[7px] leading-3 text-[#666]"><option>Modelo base</option></select>
        <Chevron dir="down" className="pointer-events-none absolute top-[3px] right-0.5 text-[#aaa]" />
      </label>
      <div className="ml-auto flex items-center gap-[5px] pr-[59px]">
        <Icon w={11} h={11} parts={[{ d: "M1 2h9v3h-3v4M3 3.500h4M5 5l-2 3", c: faint }]} />
        <Icon w={11} h={11} parts={[{ d: "M2 6l5-4v4h3v3h-8z", c: faint, f: "#999" }]} />
        <Icon w={11} h={11} parts={[{ d: "M1 2h5v4h-5zM6 6l3 4M5 6h4", c: faint, f: "#999" }]} />
        <Icon w={11} h={11} parts={[{ d: "M2 1h7v5h-7zM2 9h4M8 6l2 4", c: faint, f: "#999" }]} />
        <Icon w={11} h={11} parts={[{ d: "M4 1v7M1 4h6M8 8l2 2M7 6h3", c: faint }]} />
        <Icon w={11} h={11} parts={[{ d: "M2.500 5.500a3 3 0 1 0 6 0a3 3 0 1 0-6 0", c: faint, w: 1.6 }]} />
        <div className="flex items-center"><Icon w={11} h={11} parts={[{ d: "M1 1.500h9l-3.500 4v4l-2-1v-3z", c: "#5a6f8c", f: "#dde6f0" }]} />:0</div>
      </div>
    </footer>
  );
}

type Row = { p: string; v?: string; f?: string; lock?: boolean; dim?: boolean; focus?: boolean };
const groups: { title: string; height: string; rows: Row[]; closed?: boolean }[] = [
  { title: "Restricciones", height: "h-[25px]", rows: [{ p: "Elevación por defecto", v: "0'  0\"", lock: true, focus: true }] },
  {
    title: "Texto", height: "h-[70px]",
    rows: [{ p: "ElemId (por defecto)", v: "baseID" }, { p: "XYZ1 (por defecto)" }, { p: "XYZ2 (por defecto)" }, { p: "XYZ3 (por defecto)" }, { p: "XYZ4 (por defecto)" }],
  },
  { title: "Cotas", height: "h-[25px]", rows: [{ p: "Depth", v: "1'  0\"", lock: true }] },
  {
    title: "Otros", height: "h-[149px]",
    rows: [
      { p: "Aperture Ratio (por defecto)", v: "0.300000" },
      { p: "ETFE Inflation Ratio (por defecto)", v: "1.000000" },
      { p: "filletArc (por defecto)", v: "0.173250", f: " filletT - filletT / 100", dim: true },
      { p: "filletT (por defecto)", v: "0.175000", f: " invT / 4", dim: true },
      { p: "invSmallFillet", v: "0.904760", f: " 1 - smallFillet" },
      { p: "invFilletT (por defecto)", v: "0.825000", f: " 1 - filletT", dim: true },
      { p: "invT (por defecto)", v: "0.700000", f: " 1 - t", dim: true },
      { p: "smallFillet", v: "0.095240" },
      { p: "smallFilletArc", v: "0.094288", f: " smallFillet - smallFillet / 100" },
      { p: "t (por defecto)", v: "0.300000", f: " if(Aperture Ratio < 0.49, if(Apertur", dim: true },
      { p: "uDiv", v: "4", lock: true },
      { p: "vDiv", v: "4", lock: true },
    ],
  },
  { title: "Datos de identidad", height: "h-[14px]", rows: [], closed: true },
];

function ParameterTable() {
  const td = "border-r border-b border-[#c6c6c6] p-0 whitespace-pre overflow-hidden leading-[9px]";
  return (
    <table className="h-[354px] w-full table-fixed border-separate border-spacing-0 border-l border-[#777] bg-white text-[#111]">
      <colgroup><col className="w-[116px]" /><col className="w-[116px]" /><col className="w-[121px]" /><col /></colgroup>
      <thead className="h-[14px]">
        <tr>
          {["Parámetro", "Valor", "Fórmula", "Bloquear"].map((h) => (
            <th key={h} scope="col" className="border-y border-r border-[#777] bg-[#f0f0f0] p-0 font-normal leading-[9px]">{h}</th>
          ))}
        </tr>
      </thead>
      {groups.map((gr) => (
        <tbody key={gr.title} className={gr.height}>
          <tr className="h-[3px]"><td colSpan={4} className="h-[3px] p-0" /></tr>
          <tr>
            <th colSpan={4} scope="rowgroup" className="bg-[#99b4d1] p-0 text-left leading-[9px] text-[#111]">
              <span className="flex items-center justify-between pr-[3px] pl-0.5">
                {gr.title}
                <button type="button" aria-label={gr.closed ? "Expandir" : "Contraer"} className={gr.closed ? "rotate-180" : ""}>
                  <Icon w={5} h={7} parts={[{ d: "M1 3L2.500 1.500L4 3M1 5.500L2.500 4L4 5.500" }]} />
                </button>
              </span>
            </th>
          </tr>
          {gr.rows.map((r) => (
            <tr key={r.p}>
              <td className={`${td} pl-0.5 ${r.dim ? "text-[#8c8c8c]" : ""}`}>{r.p}</td>
              <td className={`${td} pl-0.5 ${r.dim ? "text-[#8c8c8c]" : ""} ${r.focus ? "outline outline-1 -outline-offset-1 outline-[#222]" : ""}`}>{r.v}</td>
              <td className={td}>={r.f}</td>
              <td className={`${td} pl-px`}>
                {r.lock && <input type="checkbox" aria-label={`Bloquear ${r.p}`} className="block h-2 w-2 appearance-none border border-[#444] bg-white" />}
              </td>
            </tr>
          ))}
        </tbody>
      ))}
      <tbody>
        <tr>
          <td className={td} /><td className={td} /><td className={td} /><td className={td} />
        </tr>
      </tbody>
    </table>
  );
}

const newDoc: Stroke[] = [{ d: "M2.500 5v5.500h7v-5l-2-2h-2.500", c: "#666", f: "#fff" }, { d: "M7.500 3.500v2h2", c: "#777" }, { d: "M1 1l2.500 2.500M3.500 1l-2.500 2.500", c: "#e0812c", w: 1.3 }];
const delDoc: Stroke[] = [{ d: "M3 5v5.500h6.500v-5l-2-2h-2.500M7.500 3.500v2h2", c: "#aaa", f: "#f8f8f8" }, { d: "M1 1l3 3M4 1l-3 3", c: "#c87878" }];
const sortTools: { label: string; parts: Stroke[] }[] = [
  { label: "Editar parámetro", parts: [{ d: "M1 10.500l1-3 6.500-6.500 2 2-6.500 6.500z", c: "#5c5030", f: "#d9c98a" }] },
  { label: "Nuevo parámetro", parts: newDoc },
  { label: "Eliminar parámetro", parts: delDoc },
  { label: "Subir", parts: [{ d: "M3 10v-8M1 4l2-2 2 2", c: "#888", w: 1.3 }, { d: "M7 1.500h4M7 5.500h3M7 9.500h4M7 1.500v8", c: "#a5a5a5" }] },
  { label: "Bajar", parts: [{ d: "M3 1v8M1 7l2 2 2-2", c: "#888", w: 1.3 }, { d: "M7 1.500h4M7 5.500h3M7 9.500h4M7 1.500v8", c: "#a5a5a5" }] },
  { label: "Orden ascendente", parts: [{ d: "M2 5l1.500-4 1.500 4M2.500 4h2M2 7h3l-3 3h3", c: "#33445c" }, { d: "M8.500 2v7M7 7.500l1.500 1.500 1.500-1.500", c: "#1f3f6c", w: 1.3 }] },
  { label: "Orden descendente", parts: [{ d: "M2 5l1.500-4 1.500 4M2.500 4h2M2 7h3l-3 3h3", c: "#33445c" }, { d: "M8.500 10v-8M7 3.500l1.500-1.500 1.500 1.500", c: "#1f3f6c", w: 1.3 }] },
];

function FamilyTypesDialog() {
  const btn = "h-[14px] border bg-[#e3e3e3]";
  return (
    <div role="dialog" aria-labelledby="dialog-title" className="absolute top-[99px] left-[121px] w-[412px] border border-[#7b7b7b] bg-[#f0f0f0] text-[#222] shadow-[2px_3px_6px_rgba(0,0,0,0.45)]">
      <div className="flex h-[18px] items-center justify-between bg-white pr-[5px] pl-1">
        <h2 id="dialog-title">Tipos de familia</h2>
        <button type="button" aria-label="Cerrar"><Icon w={8} h={8} parts={[{ d: "M1 1l6 6M7 1l-6 6", c: "#222" }]} /></button>
      </div>
      <div className="pt-[7px] pr-[7px] pl-1.5">
        <div className="flex h-4 items-center">
          <label htmlFor="type-name" className="shrink-0 pr-px whitespace-nowrap">Nombre de tipo:</label>
          <span className="relative flex-1">
            <select id="type-name" disabled className="block h-[13px] w-full appearance-none bg-[#cbcbcb] text-[7px]"><option></option></select>
            <Chevron dir="down" className="pointer-events-none absolute top-[3px] right-0.5 text-[#aaa]" />
          </span>
          <div className="ml-[7px] flex gap-0.5">
            <button type="button" aria-label="Tipo nuevo" className="flex h-4 w-[17px] items-center justify-center bg-[#d8e8f5]"><Icon w={12} h={12} parts={newDoc} /></button>
            <button type="button" aria-label="Renombrar" className="flex h-4 w-[17px] items-center justify-center"><Icon w={12} h={10} parts={[{ d: "M1 1.500h10v6h-10z", c: "#a3b3c6", f: "#dfe7f0" }, { d: "M3 6v-3h1.500v1.500h-1.500M6 6v-3M8 3v3M7.500 3h2v3h-2", c: "#7f96b0" }]} /></button>
            <button type="button" aria-label="Eliminar" className="flex h-4 w-[17px] items-center justify-center"><Icon w={12} h={12} parts={delDoc} /></button>
          </div>
        </div>
        <label className="mt-[5px] flex h-[13px] items-center border border-[#8e8e8e] bg-white pr-px">
          <input type="search" aria-label="Parámetros de búsqueda" placeholder="Parámetros de búsqueda" className="h-[11px] min-w-0 flex-1 bg-transparent pl-px outline-none placeholder:text-[#333] placeholder:opacity-100" />
          <Icon w={11} h={11} parts={[{ d: "M1.500 4.500a3 3 0 1 0 6 0a3 3 0 1 0-6 0", c: "#333", f: "#e8f4f4" }, { d: "M7 7l3 3", c: "#333", w: 1.5 }]} />
        </label>
        <div className="mt-1.5"><ParameterTable /></div>
        <div className="flex h-[11px] items-center text-[#333]">
          <Chevron dir="left" className="mx-0.5" />
          <i className="h-[9px] w-[300px] bg-[#cdcdcd]" />
          <Chevron dir="right" className="mr-px ml-auto" />
        </div>
      </div>
      <div className="flex items-center pt-[7px] pr-0.5 pl-0.5">
        {sortTools.map((t) => (
          <button type="button" key={t.label} aria-label={t.label} className="flex w-[19px] justify-center pl-1"><Icon w={12} h={12} parts={t.parts} /></button>
        ))}
        <button type="button" className={`${btn} ml-auto w-[98px] border-[#a9a9a9]`}>Gestionar tablas de consulta</button>
      </div>
      <div className="flex justify-between pt-2 pr-1 pb-1.5 pl-1.5">
        <a href="#" className="w-[110px] leading-2 text-[#1264b8] underline">¿Cómo se gestionan los tipos de familia?</a>
        <div className="flex gap-1">
          <button type="button" className={`${btn} w-12 border-[#0f6cbd] outline outline-1 -outline-offset-2 outline-[#5a9bd5]`}>Aceptar</button>
          <button type="button" className={`${btn} w-12 border-[#a9a9a9]`}>Cancelar</button>
          <button type="button" className={`${btn} w-12 border-[#a9a9a9]`}>Aplicar</button>
        </div>
      </div>
    </div>
  );
}

function Callouts() {
  return (
    <div className="pointer-events-none absolute top-0 left-0 text-[19px] leading-6 text-[#138da3]">
      <svg width="540" height="500" viewBox="0 0 540 500" className="block" aria-hidden="true">
        <path d="M129 212H95V456M95 281H129M95 307H129M66 456H128M360 335H481V426H360zM392 426V472" fill="none" stroke="#138da3" strokeWidth="2" />
      </svg>
      <span className="absolute top-[446px] left-12">1</span>
      <span className="absolute top-[482px] left-[386px]">2</span>
    </div>
  );
}

export default function App() {
  return (
    <div className="relative flex h-screen flex-col overflow-hidden bg-[#cbcbcb] font-['Open_Sans','Noto_Sans',sans-serif] text-[7px] leading-[9px]">
      <TopBar />
      <div className="flex min-h-0 flex-1">
        <Browser />
        <Viewport />
      </div>
      <StatusBar />
      <FamilyTypesDialog />
      <Callouts />
    </div>
  );
}
